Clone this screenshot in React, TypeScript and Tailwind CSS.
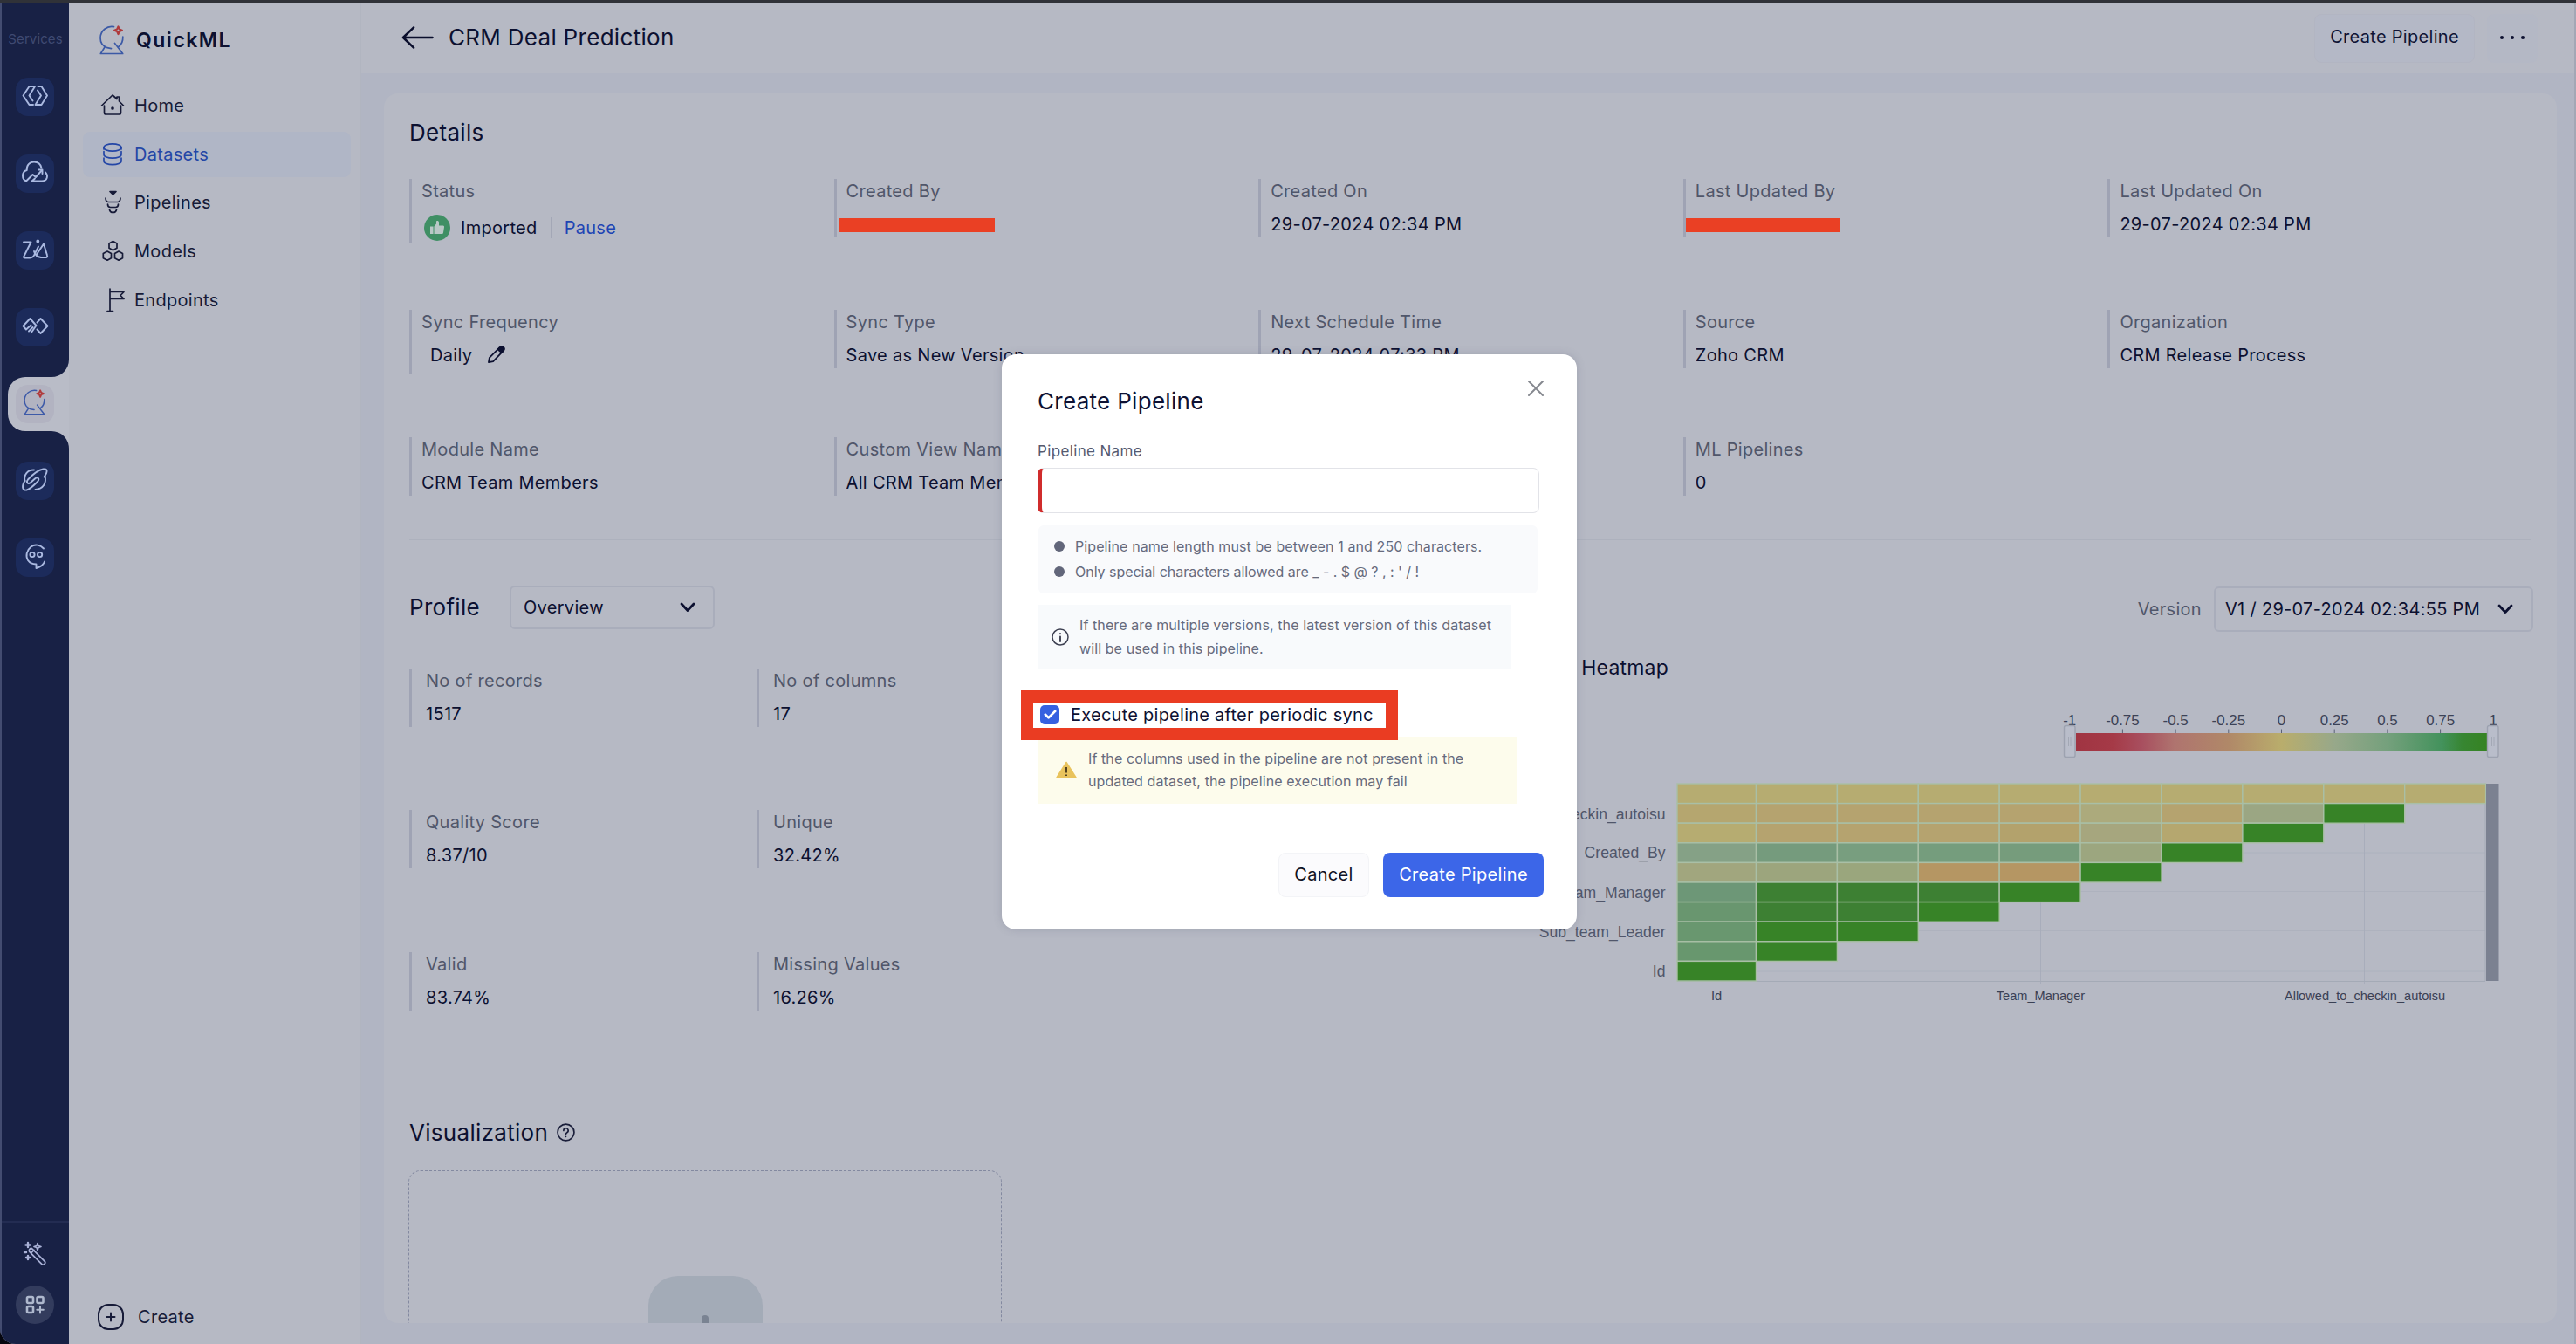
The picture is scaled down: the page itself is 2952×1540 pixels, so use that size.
import type { ReactNode } from 'react'
import clsx from 'clsx'

const strokeProps = {
  fill: 'none',
  stroke: 'currentColor',
  strokeLinecap: 'round',
  strokeLinejoin: 'round',
} as const

function QuickMLLogo({ className }: { className?: string }) {
  return (
    <svg viewBox="0 0 28 34" className={className} {...strokeProps} strokeWidth="1.7">
      <path d="M16.5 1.6C9 0 1 6 1 14.5c0 5 3 9.500 8 11.200l4.500.9" />
      <path d="M26.800 13c.2 5-1.500 9-5 11.500" />
      <path d="M6 25 1.300 32.500h25.400L17.500 20.500" />
      <path d="M21.500 1.500 22.800 4.400 25.900 5.700 22.800 7 21.500 10 20.200 7 17.100 5.700 20.200 4.400Z" stroke="#b03a3c" strokeWidth="2.200" />
    </svg>
  )
}

const railIcons: Record<string, ReactNode> = {
  serverless: (
    <>
      <path d="M20 31H15.500L8.500 20.500 15.500 10H22L15.500 20.500 19.500 26.500" />
      <path d="M25.500 10H29.500L36 20.500 29.500 31H22.500L29 20.500 25 14.500" />
    </>
  ),
  cloud: (
    <>
      <path d="M29.500 15.500C28.500 11 25 8.500 21 8.500c-5 0-8.800 4-8.300 9.500C9.500 19 8 21.500 8 24.500c0 3 1.500 5 4 6L19.500 23l3.500 3 7-8" />
      <path d="M26 17.500h4.500V22" />
      <path d="M34 20.500c3.500 3.500 2.500 10-4 10H18.500L22 27.500" />
    </>
  ),
  zia: (
    <>
      <path d="M9 12.500h8.500L9 29.500c0 .8.500 1 1.500 1H16c3 0 5-2 6-5l4-8" />
      <path d="M21 23c1 4 4 6.500 8 7h5.500c1.500 0 2-1 1.500-2.500L32 14.500l-8 12" />
      <circle cx="25.300" cy="11.500" r="1" fill="currentColor" />
    </>
  ),
  signals: (
    <>
      <path d="M12 24.500 8.500 20.500 16.500 12l7 8-6 8.500M12.500 24l5-4.500M15 26.500l4.500-4.500" />
      <path d="M24.500 16.500 28.500 12 36.500 20.500 28.500 29 24.500 24.500" />
    </>
  ),
  circuits: (
    <>
      <path d="M21 9.500c-7.500-.5-12 6-10.500 12.500" />
      <path d="M10.500 22C6.500 28 7.500 33.500 12.500 32.500c4-1 8-5 12.500-9.500 3-3.500 0-6-3-3.500l-5 4.500c-3 2.500-5.500-.5-3-3.500C19.500 14.500 26 9.500 31.500 8.500c5-.8 5.500 3 1 9" />
      <path d="M22.500 32c9-.5 13-7.500 11-15.500" />
    </>
  ),
  bot: (
    <>
      <path d="M32 11.500C28.500 7.500 22 6 17.500 9.500 12.500 13.500 11 20 14 25c2 3 5.500 4.500 9.500 4.500V34c5-1.500 8.500-4 9.500-7.500" />
      <circle cx="19" cy="18.500" r="2.600" />
      <circle cx="27.600" cy="18.500" r="2.600" />
    </>
  ),
}

function RailTile({ name }: { name: string }) {
  return (
    <div className="flex h-[88px] items-center">
      <div className="size-[44px] rounded-[14px] bg-[#1c2b5b] text-[#aab9e0]">
        <svg viewBox="0 0 44 44" className="size-[44px]" {...strokeProps} strokeWidth="1.900">
          {railIcons[name]}
        </svg>
      </div>
    </div>
  )
}

function Rail() {
  return (
    <aside className="flex w-[79px] shrink-0 flex-col items-center border-l-2 border-[#434c70] bg-[#182145]">
      <div className="mt-[33px] h-[27px] text-[15px] leading-[18px] tracking-[0.1px] text-[#3f4a72]">Services</div>
      <div className="mt-[4px] flex flex-col items-center">
        <div className="mr-[2px]">
          <RailTile name="serverless" />
          <RailTile name="cloud" />
          <RailTile name="zia" />
          <RailTile name="signals" />
        </div>
        <div className="relative flex h-[88px] w-[77px] items-center justify-center pr-[2px]">
          <div className="absolute top-[13px] right-0 h-[62px] w-[70px] rounded-l-[20px] bg-[#b9bcc7]" />
          <svg viewBox="0 0 20 20" className="absolute top-[-7px] right-0 size-[20px]">
            <path d="M20 0V20H0A20 20 0 0 0 20 0Z" fill="#b9bcc7" />
          </svg>
          <svg viewBox="0 0 20 20" className="absolute top-[75px] right-0 size-[20px]">
            <path d="M20 20V0H0A20 20 0 0 1 20 20Z" fill="#b9bcc7" />
          </svg>
          <div className="relative flex size-[44px] justify-center rounded-[14px] bg-[#b2b3c1] pt-[5px]">
            <QuickMLLogo className="h-[30px] w-[25px] text-[#3d5aa8]" />
          </div>
        </div>
        <div className="mr-[2px]">
          <RailTile name="circuits" />
          <RailTile name="bot" />
        </div>
      </div>
      <div className="mt-auto flex h-[141px] w-full flex-col items-center border-t-2 border-[#232c52] pt-[21px] pr-[2px]">
        <svg viewBox="0 0 28 28" className="size-[28px] text-[#a9b1d6]" {...strokeProps} strokeWidth="1.700">
          <rect x="4.500" y="15.500" width="24" height="4.600" rx="2.300" transform="rotate(45 16.500 17.800)" />
          <path d="M10 13.500l3-3" />
          <path d="M17 2.500 18 5.500 21 6.500 18 7.500 17 10.500 16 7.500 13 6.500 16 5.500Z" />
          <path d="M6 2v5M3.500 4.500h5M2 13h2M6 17v4M4 19h4" strokeWidth="2.400" />
        </svg>
        <div className="mt-[23px] flex size-[44px] items-center justify-center rounded-full bg-[#333c5d]">
          <svg viewBox="0 0 22 22" className="size-[22px] text-[#aeb8cd]" {...strokeProps} strokeWidth="2.600">
            <rect x="2" y="2" width="7" height="7" rx="1.500" />
            <rect x="13.500" y="2" width="7" height="7" rx="1.500" />
            <rect x="2" y="13" width="7" height="7" rx="1.500" />
            <path d="M17 13v7.500M13.300 16.700h7.500" strokeWidth="2" />
          </svg>
        </div>
      </div>
    </aside>
  )
}

const navItems = [
  {
    label: 'Home',
    icon: (
      <>
        <path d="M1.500 14 14 2l5 4.500V4h2.500v5L26.500 14" />
        <path d="M4.500 14v8a2 2 0 0 0 2 2h15a2 2 0 0 0 2-2V14" />
        <circle cx="14" cy="17" r="1" fill="currentColor" />
      </>
    ),
  },
  {
    label: 'Datasets',
    active: true,
    icon: (
      <>
        <ellipse cx="14" cy="6" rx="10" ry="4.200" />
        <path d="M4 10.500v3.500c0 2.500 4.500 4.200 10 4.200s10-1.700 10-4.200v-3.500M4 18v3.500c0 2.500 4.500 4.200 10 4.200s10-1.700 10-4.200V18M4 6v2M24 6v2" />
      </>
    ),
  },
  {
    label: 'Pipelines',
    icon: (
      <>
        <path d="M11 1.500h7L14.500 5Z" fill="currentColor" />
        <path d="M6 9c0 3 1 4.500 3.500 4.500h10C22 13.500 23 12 23 9M8.500 16c0 2.500 1 3.500 3 3.500h6c2 0 3-1 3-3.500M10.500 22.500c.5 2 2 3 4 3s3.500-1 4-3" />
      </>
    ),
  },
  {
    label: 'Models',
    icon: (
      <>
        <path d="M14.500 2.500 19 5v5.200l-4.500 2.600L10 10.200V5Z" />
        <path d="M8 14l4.500 2.500v5.200L8 24.200l-4.700-2.500v-5.200ZM21 14l4.500 2.500v5.200L21 24.200l-4.500-2.500v-5.200Z" />
      </>
    ),
  },
  {
    label: 'Endpoints',
    icon: <path d="M11 1v25M8 26.500h6.500M11 4.500h16l-4 4 4 4H11" />,
  },
]

function Sidebar() {
  return (
    <nav className="flex w-[335px] shrink-0 flex-col border-r border-[#b1b5c0] text-[20px] tracking-[0.3px] text-[#171b38]">
      <div className="flex h-[86px] items-center pl-[35px]">
        <QuickMLLogo className="h-[34px] w-[28px] text-[#3c5aa6]" />
        <span className="ml-[14px] text-[23px] font-semibold tracking-[1.5px] text-[#0d1131]">QuickML</span>
      </div>
      <div className="mt-[6px] flex flex-col gap-[3.700px] pl-[16px]">
        {navItems.map((item) => (
          <div
            key={item.label}
            className={clsx(
              'flex h-[52px] w-[307px] items-center rounded-[8px] pl-[20px]',
              item.active && 'bg-[#b0b6c6] text-[#2446a6]',
            )}
          >
            <svg viewBox="0 0 28 28" className="size-[28px]" {...strokeProps} strokeWidth="1.700">
              {item.icon}
            </svg>
            <span className="ml-[11px]">{item.label}</span>
          </div>
        ))}
      </div>
      <div className="mt-auto mb-[16px] flex items-center pl-[33px]">
        <svg viewBox="0 0 30 30" className="size-[30px]" {...strokeProps} strokeWidth="2">
          <rect x="1" y="1" width="28" height="28" rx="11" />
          <path d="M15 10.500v9M10.500 15h9" />
        </svg>
        <span className="ml-[16px]">Create</span>
      </div>
    </nav>
  )
}

function Header() {
  return (
    <header className="flex h-[81px] shrink-0 items-center pr-[42px] pl-[46px]">
      <svg viewBox="0 0 38 28" className="mb-[2px] h-[28px] w-[37px] text-[#0a0e2c]" {...strokeProps} strokeWidth="2.600">
        <path d="M36.500 14H2M14.500 2 2 14l12.500 12" />
      </svg>
      <h1 className="mb-[1px] ml-[17px] text-[26px] leading-[32px] font-[420] tracking-[0.3px] text-[#0c1030]">CRM Deal Prediction</h1>
      <button className="mt-[1px] ml-auto h-[56px] w-[184px] rounded-[8px] border border-[#b2b5c2] bg-[#b4b8c6] pb-[4px] text-[20px] tracking-[0.3px] text-[#0f1334]">
        Create Pipeline
      </button>
      <button className="mt-[1px] ml-[14px] flex h-[56px] w-[58px] items-center justify-center gap-[8px] rounded-[8px] bg-[#b4b8c5] pb-[3px]">
        <span className="size-[4px] rounded-full bg-[#0c1030]" />
        <span className="size-[4px] rounded-full bg-[#0c1030]" />
        <span className="size-[4px] rounded-full bg-[#0c1030]" />
      </button>
    </header>
  )
}

interface FieldProps {
  label: string
  tall?: boolean
  children?: ReactNode
}

function Field({ label, tall, children }: FieldProps) {
  return (
    <div
      className={clsx(
        'border-l-[3px] border-[#9fa3b4] pl-[11px] text-[20px] leading-[28px] tracking-[0.3px] text-[#50566a]',
        tall ? 'h-[74px]' : 'h-[67px]',
      )}
    >
      <div>{label}</div>
      <div className="mt-[10px] font-[420] text-[#0c1030]">{children}</div>
    </div>
  )
}

// Owner names are covered by a marker stroke
function Redacted({ className }: { className?: string }) {
  return <div className={clsx('relative top-[7px] h-[16px] bg-[#ea4024]', className)} />
}

function Details() {
  return (
    <section className="flex flex-col">
      <h2 className="mt-[29px] text-[26px] leading-[32px] font-[420] tracking-[0.3px] text-[#0c1030]">Details</h2>
      <div className="mt-[37px] grid grid-cols-[repeat(5,486.600px)] grid-rows-[149.500px_146px_117px]">
        <Field label="Status" tall>
          <div className="-mt-[1px] flex h-[38px] items-center">
            <span className="ml-[3px] flex size-[30px] items-center justify-center rounded-full bg-[#3f8f64]">
              <svg viewBox="0 0 18 18" className="size-[18px] fill-[#b9c8c6]">
                <path d="M1 7.500h3.500V16H1ZM5.500 7.500 8 4.500V2c0-1.500 3-1.300 3 .8V6.500h4.500c1 0 1.700.8 1.500 1.700L16 14.500c-.2 1-.8 1.500-1.700 1.500H5.500Z" />
              </svg>
            </span>
            <span className="ml-[12px]">Imported</span>
            <span className="mx-[15px] h-[24px] w-px bg-[#a3a7b6]" />
            <span className="text-[#1f45b4]">Pause</span>
          </div>
        </Field>
        <Field label="Created By">
          <Redacted className="-left-[8px] w-[178px]" />
        </Field>
        <Field label="Created On">29-07-2024 02:34 PM</Field>
        <Field label="Last Updated By">
          <Redacted className="-left-[11px] w-[177px]" />
        </Field>
        <Field label="Last Updated On">29-07-2024 02:34 PM</Field>

        <Field label="Sync Frequency" tall>
          <div className="flex items-center pl-[10px]">
            Daily
            <svg viewBox="0 0 22 22" className="ml-[17px] size-[21px]" {...strokeProps} strokeWidth="1.800">
              <path d="M2 20l1-5.500L14 3.500a2.500 2.500 0 0 1 4.500 4L7.500 19Z" />
              <path d="M13 4.500 15.500 2a2.600 2.600 0 0 1 4.500 4L17.500 8.500Z" fill="currentColor" />
            </svg>
          </div>
        </Field>
        <Field label="Sync Type">Save as New Version</Field>
        <Field label="Next Schedule Time">29-07-2024 07:33 PM</Field>
        <Field label="Source">Zoho CRM</Field>
        <Field label="Organization">CRM Release Process</Field>

        <Field label="Module Name">CRM Team Members</Field>
        <Field label="Custom View Name">All CRM Team Members</Field>
        <Field label="Columns">17</Field>
        <Field label="ML Pipelines">0</Field>
      </div>
      <hr className="w-[2432px] border-[#adb1bd]" />
    </section>
  )
}

function Chevron() {
  return (
    <svg viewBox="0 0 18 12" className="h-[12px] w-[18px] text-[#0c1030]" {...strokeProps} strokeWidth="2.800">
      <path d="M2 2l7 7.500L16 2" />
    </svg>
  )
}

const stats = [
  ['No of records', '1517'],
  ['No of columns', '17'],
  ['Quality Score', '8.37/10'],
  ['Unique', '32.42%'],
  ['Valid', '83.74%'],
  ['Missing Values', '16.26%'],
]

const legendTicks = ['-1', '-0.75', '-0.5', '-0.25', '0', '0.25', '0.5', '0.75', '1']

const Y = '#b6ac71'
const Y2 = '#b5a66f'
const O = '#b5a36f'
const S = '#9ba683'
const G = '#378327'
const D = '#3d8033'

const heatRows = [
  [Y, Y, Y, Y, Y, Y, Y, Y, Y, Y],
  [Y2, O, O, O, O, '#acaa7c', O, S, G],
  [Y, O, O, O, '#b3a26c', '#a6a67e', '#b5a76f', G],
  ['#85a186', '#759b7d', '#789e7f', '#759d7d', '#769c7c', '#9ca67f', G],
  ['#a1a67e', '#9ca57d', '#9aa67d', '#b59663', '#b59663', G],
  ['#6d9777', D, D, D, G],
  ['#69966f', D, D, G],
  ['#69976f', G, G],
  ['#68976e', G],
  [G],
]

function Heatmap() {
  const x0 = 182
  const y0 = 78
  const colX = (i: number) => (i === 0 ? x0 : x0 + 90.5 + (i - 1) * 92.9)
  return (
    <svg
      viewBox="-60 -20 1190 370"
      className="-ml-[60px] h-[370px] w-[1190px] font-[Liberation_Sans,Arial,sans-serif]"
    >
      <defs>
        <linearGradient id="legend">
          <stop offset="0" stopColor="#a03442" />
          <stop offset="0.09" stopColor="#a53a47" />
          <stop offset="0.16" stopColor="#a84f5f" />
          <stop offset="0.24" stopColor="#af746f" />
          <stop offset="0.37" stopColor="#b08868" />
          <stop offset="0.5" stopColor="#b9ad6c" />
          <stop offset="0.63" stopColor="#97a88a" />
          <stop offset="0.76" stopColor="#74a07c" />
          <stop offset="0.89" stopColor="#43925c" />
          <stop offset="0.94" stopColor="#378632" />
          <stop offset="1" stopColor="#358322" />
        </linearGradient>
      </defs>

      <g fontSize="16.900" fill="#3c4256" textAnchor="middle">
        {legendTicks.map((t, i) => (
          <g key={t}>
            <text x={631.7 + i * 60.7} y="11">
              {t}
            </text>
            <path d={`M${631.7 + i * 60.7} 15.500v5`} stroke="#5b6175" />
          </g>
        ))}
      </g>
      <rect x="639" y="20" width="471" height="20" fill="url(#legend)" />
      {[625.5, 1110.5].map((x) => (
        <g key={x}>
          <rect x={x} y="11.500" width="12.500" height="36" rx="2" fill="#b9bdca" stroke="#9da2b0" strokeWidth="1.400" />
          <path d={`M${x + 5} 24v11M${x + 7.5} 24v11`} stroke="#a3a8b5" />
        </g>
      ))}

      <g stroke="#a8adbb">
        <path d="M598.500 78v230M969.500 78v230" />
        <path d="M182 157h926M182 201.500h926M182 246.500h926M182 293h926" strokeOpacity="0.600" />
        <path d="M182 304.500h926M1108 78v226" stroke="#a4aab6" />
      </g>
      {heatRows.map((row, r) =>
        row.map((color, c) => (
          <rect
            key={`${r}-${c}`}
            x={colX(c)}
            y={y0 + r * 22.6}
            width={colX(c + 1) - colX(c)}
            height="22.600"
            fill={color}
            stroke="#a9bfa6"
            strokeWidth="1.400"
          />
        )),
      )}
      <rect x="1109" y="78" width="14.500" height="226" fill="#7b8191" />

      <g fontSize="17.600" fill="#50566a" textAnchor="end">
        <text x="168.500" y="118.500">Allowed_to_checkin_autoisu</text>
        <text x="168.500" y="163">Created_By</text>
        <text x="168.500" y="208.500">Team_Manager</text>
        <text x="168.500" y="253.500">Sub_team_Leader</text>
        <text x="168.500" y="299">Id</text>
      </g>
      <g fontSize="14.600" fill="#3a4054" textAnchor="middle">
        <text x="227" y="326">Id</text>
        <text x="598.500" y="326">Team_Manager</text>
        <text x="970" y="326">Allowed_to_checkin_autoisu</text>
      </g>
    </svg>
  )
}

function Profile() {
  return (
    <section className="mt-[52px] flex h-[603px] justify-between pr-[27px]">
      <div>
        <div className="flex h-[50px] items-center">
          <h2 className="w-[115px] text-[26px] font-[420] tracking-[0.3px] text-[#0c1030]">Profile</h2>
          <div className="flex h-[50px] w-[235px] items-center justify-between rounded-[6px] border-2 border-[#a9adbb] pr-[20px] pl-[14px] text-[20px] font-[420] tracking-[0.3px] text-[#0c1030]">
            Overview
            <Chevron />
          </div>
        </div>
        <div className="mt-[45px] grid auto-rows-[162.500px] grid-cols-[398px_398px]">
          {stats.map(([label, value]) => (
            <div key={label} className="h-[67px] border-l-[3px] border-[#9fa3b4] pl-[16px] text-[20px] leading-[28px] tracking-[0.3px] text-[#50566a]">
              <div>{label}</div>
              <div className="mt-[10px] font-[420] text-[#0c1030]">{value}</div>
            </div>
          ))}
        </div>
      </div>

      <div className="flex w-[1163px] flex-col">
        <div className="mt-[1px] flex h-[52px] items-center justify-end text-[20px] tracking-[0.3px] text-[#50566a]">
          Version
          <div className="ml-[14px] flex h-[52px] w-[366px] items-center justify-between rounded-[6px] border-2 border-[#a9adbb] pr-[21px] pl-[11px] text-[#0c1030]">
            V1 / 29-07-2024 02:34:55 PM
            <Chevron />
          </div>
        </div>
        <h3 className="mt-[26px] w-[172px] text-right text-[23px] leading-[30px] font-[420] tracking-[0.2px] whitespace-nowrap text-[#0c1030]">
          Heatmap
        </h3>
        <div className="mt-[20px]">
          <Heatmap />
        </div>
      </div>
    </section>
  )
}

function Visualization() {
  return (
    <section>
      <div className="-mt-[1px] flex h-[50px] items-center">
        <h2 className="text-[26px] font-[420] tracking-[0.3px] text-[#0c1030]">Visualization</h2>
        <svg viewBox="0 0 20 20" className="ml-[10px] size-[21px] text-[#1a1e3a]" {...strokeProps} strokeWidth="1.600">
          <circle cx="10" cy="10" r="9" />
          <path d="M7.500 8a2.500 2.500 0 1 1 3.700 2.200c-.8.500-1.200.9-1.200 1.800M10 14.500v.1" />
        </svg>
      </div>
      <div className="mt-[18px] -ml-[1px] flex h-[420px] w-[680px] justify-center rounded-[14px] border border-dashed border-[#8389a0] pt-[120px]">
        <div className="flex size-[131px] justify-center rounded-[34px] bg-[#a3abb7] pt-[45px]">
          <div className="h-[40px] w-[8px] rounded-full bg-[#7a8392]" />
        </div>
      </div>
    </section>
  )
}

function CreatePipelineDialog() {
  return (
    <div className="absolute top-[406px] left-[1148px] flex h-[659px] w-[659px] flex-col rounded-[16px] bg-white pr-[38px] pl-[41px] shadow-[0_0_10px_rgba(90,95,120,0.25)]">
      <div className="mt-[28px] flex h-[52px] justify-between">
        <h2 className="text-[26px] leading-[52px] font-[420] tracking-[0.3px] text-[#0d1133]">Create Pipeline</h2>
        <svg viewBox="0 0 20 20" className="mt-[1px] mr-[-1px] size-[20px]" {...strokeProps} stroke="#85888f" strokeWidth="2">
          <path d="M2 2l16 16M18 2L2 18" />
        </svg>
      </div>
      <label className="mt-[19px] text-[17px] leading-[24px] font-[420] tracking-[0.350px] text-[#555a70]">Pipeline Name</label>
      <div className="mt-[7px] h-[52px] w-[575px] rounded-[7px] border-[1.500px] border-l-[5px] border-[#e2e3e8] border-l-[#d02c2c]" />

      <div className="mt-[14px] ml-px flex h-[78px] w-[572px] flex-col justify-center gap-[5px] rounded-[6px] bg-[#f9fafc] pb-[2px] pl-[18px] text-[16px] leading-[24px] tracking-[0.100px] text-[#666a7c]">
        <div className="flex items-center">
          <span className="mr-[12px] size-[12px] rounded-full bg-[#62667a]" />
          Pipeline name length must be between 1 and 250 characters.
        </div>
        <div className="flex items-center">
          <span className="mr-[12px] size-[12px] rounded-full bg-[#62667a]" />
          <span className="tracking-[-0.03px]">Only special characters allowed are _ - . $ @ ? , : ' / !</span>
        </div>
      </div>

      <div className="mt-[13px] ml-px flex h-[73px] w-[542px] items-center bg-[#f8fafc] pl-[15px] text-[16px] leading-[26.500px] tracking-[0.100px] text-[#666a7c]">
        <svg viewBox="0 0 20 20" className="mr-[12px] size-[20px] shrink-0" {...strokeProps} stroke="#3e4152" strokeWidth="1.500">
          <circle cx="10" cy="10" r="9" />
          <path d="M10 9.500V15M10 6v.2" strokeWidth="1.900" />
        </svg>
        <p>
          If there are multiple versions, the latest version of this dataset
          <br />
          will be used in this pipeline.
        </p>
      </div>

      <div className="relative z-10 mt-[25px] ml-[-19px] flex h-[57px] w-[432px] items-center border-[14px] border-[#ea3c22] bg-white pb-px pl-[8px] text-[20px] tracking-[0.250px] text-[#0d1133]">
        <span className="mr-[13px] flex size-[22px] items-center justify-center rounded-[5px] bg-[#3560e0]">
          <svg viewBox="0 0 16 12" className="w-[15px]" {...strokeProps} stroke="#fff" strokeWidth="3">
            <path d="M2 6l4 4 8-8" />
          </svg>
        </span>
        <span className="whitespace-nowrap">Execute pipeline after periodic sync</span>
      </div>
      <div className="mt-[-4px] ml-px flex h-[77px] w-[548px] items-center bg-[#fdfcec] pb-[2px] pl-[20px] text-[16px] leading-[26px] tracking-[0.100px] text-[#666a7c]">
        <svg viewBox="0 0 24 20" className="mr-[13px] w-[24px] shrink-0">
          <path d="M12 1.500 23 19H1Z" fill="#e9c35c" stroke="#e9c35c" strokeLinejoin="round" strokeWidth="1.500" />
          <path d="M12 7v6.500M12 15.500v1.500" stroke="#4b3a1c" strokeWidth="1.900" />
        </svg>
        <p>
          If the columns used in the pipeline are not present in the
          <br />
          updated dataset, the pipeline execution may fail
        </p>
      </div>

      <div className="mt-[56px] flex justify-end gap-[16px] text-[20px] tracking-[0.3px]">
        <button className="h-[51px] w-[104px] rounded-[8px] border border-[#f3f4f7] bg-[#fbfbfd] pb-px text-[#0f1224]">Cancel</button>
        <button className="h-[51px] w-[184px] rounded-[8px] bg-[#3c66e8] pb-px text-white">Create Pipeline</button>
      </div>
    </div>
  )
}

export default function App() {
  return (
    <div className="h-[1540px] w-[2952px] overflow-hidden bg-[#05060f] font-[Inter,sans-serif]">
      <div className="relative flex h-full overflow-hidden rounded-bl-[18px] border-t-[3px] border-[#303238] bg-[#b6b9c4]">
        <Rail />
        <Sidebar />
        <div className="flex min-w-0 flex-1 flex-col border-r-2 border-[#a3a7b5]">
          <Header />
          <div className="flex-1 bg-[#b1b5c3] pt-[23px] pr-[20px] pl-[26px]">
            <main className="h-[1409px] overflow-hidden rounded-[16px] bg-[#b6b9c4] pl-[29px]">
              <Details />
              <Profile />
              <Visualization />
            </main>
          </div>
        </div>
      </div>
      <CreatePipelineDialog />
    </div>
  )
}
